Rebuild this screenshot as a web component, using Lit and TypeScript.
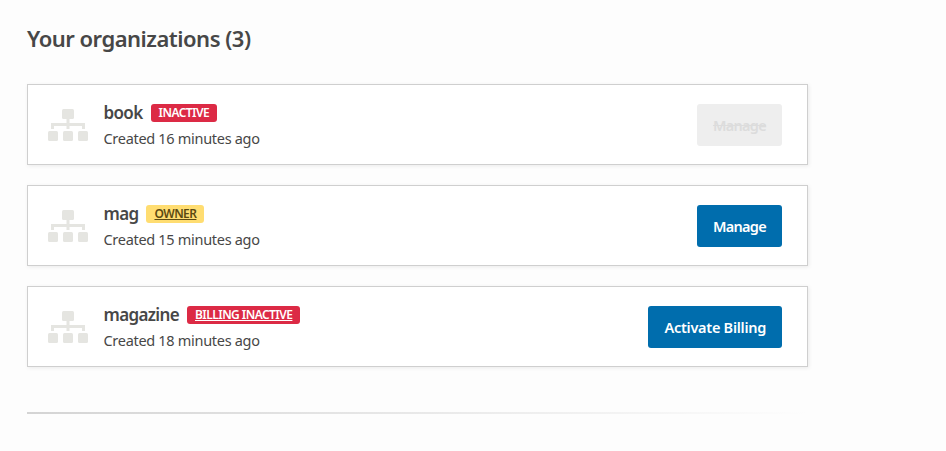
import { LitElement, html, css, svg } from "lit";
import { customElement } from "lit/decorators.js";

const orgs = [
  { name: "book", badge: "INACTIVE", kind: "red", link: false, created: "Created 16 minutes ago", action: "Manage", disabled: true, compact: true },
  { name: "mag", badge: "OWNER", kind: "yellow", link: true, created: "Created 15 minutes ago", action: "Manage", disabled: false, compact: true },
  { name: "magazine", badge: "BILLING INACTIVE", kind: "red", link: true, created: "Created 18 minutes ago", action: "Activate Billing", disabled: false, compact: false },
];

const icon = svg`<svg class="icon" width="40" height="32" viewBox="0 0 40 32" fill="#e5e5e1">
  <rect x="14" y="0" width="12" height="10" rx="1.5"/>
  <path d="M18.500 10h3v4h15.500v6h-3v-3h-12.500v3h-3v-3H6v3H3v-6h15.500z"/>
  <rect x="0" y="22" width="10" height="10" rx="1.500"/>
  <rect x="15" y="22" width="10" height="10" rx="1.500"/>
  <rect x="30" y="22" width="10" height="10" rx="1.500"/>
</svg>`;

@customElement("app-root")
export class AppRoot extends LitElement {
  static styles = css`
    :host {
      display: block;
      min-height: 451px;
      background: #fdfdfd;
      font-family: "Noto Sans", "Open Sans", sans-serif;
      color: #474747;
    }
    .page {
      width: 781px;
      padding: 24px 0 0 27px;
    }
    h2 {
      margin: 0 0 32px;
      font-size: 22px;
      line-height: 28px;
      font-weight: 600;
      letter-spacing: -0.5px;
    }
    .list {
      display: flex;
      flex-direction: column;
      gap: 20px;
    }
    .card {
      box-sizing: border-box;
      height: 81px;
      display: flex;
      align-items: center;
      background: #fff;
      border: 1px solid #cfcfcf;
      box-shadow: 1px 1px 4px rgba(0, 0, 0, 0.08);
      padding: 0 25px 0 20px;
    }
    .icon {
      flex: none;
      margin-right: 15.500px;
    }
    .info {
      flex: 1;
    }
    .title {
      display: flex;
      align-items: center;
      gap: 8px;
      height: 22px;
      margin: 1px 0 3px;
    }
    .name {
      font-size: 17px;
      font-weight: 600;
      letter-spacing: -0.65px;
    }
    .badge {
      font-size: 12px;
      line-height: 18px;
      font-weight: 600;
      padding: 0 8px;
      border-radius: 3px;
      letter-spacing: -0.55px;
    }
    .red {
      background: #dc2a45;
      color: #fff;
    }
    .yellow {
      background: #ffdd71;
      color: #5b4a12;
    }
    .link {
      text-decoration: underline;
    }
    .created {
      font-size: 14.500px;
      line-height: 22px;
      letter-spacing: -0.3px;
    }
    .btn {
      box-sizing: border-box;
      height: 42px;
      padding: 0 16px;
      display: flex;
      align-items: center;
      border-radius: 3px;
      background: #006dad;
      color: #fff;
      font-size: 14.500px;
      font-weight: 600;
      letter-spacing: -0.27px;
    }
    .btn.compact {
      letter-spacing: -0.7px;
    }
    .btn.disabled {
      background: #eeeeee;
      color: #dcdcdc;
      text-decoration: line-through;
    }
    .rule {
      margin-top: 45px;
      height: 2px;
      background: linear-gradient(to right, #d4d4d4, #fdfdfd);
    }
  `;

  render() {
    return html`<div class="page">
      <h2>Your organizations (3)</h2>
      <div class="list">
        ${orgs.map(
          (o) => html`<div class="card">
            ${icon}
            <div class="info">
              <div class="title">
                <span class="name">${o.name}</span>
                <span class="badge ${o.kind} ${o.link ? "link" : ""}">${o.badge}</span>
              </div>
              <div class="created">${o.created}</div>
            </div>
            <div class="btn ${o.disabled ? "disabled" : ""} ${o.compact ? "compact" : ""}">${o.action}</div>
          </div>`
        )}
      </div>
      <div class="rule"></div>
    </div>`;
  }
}
